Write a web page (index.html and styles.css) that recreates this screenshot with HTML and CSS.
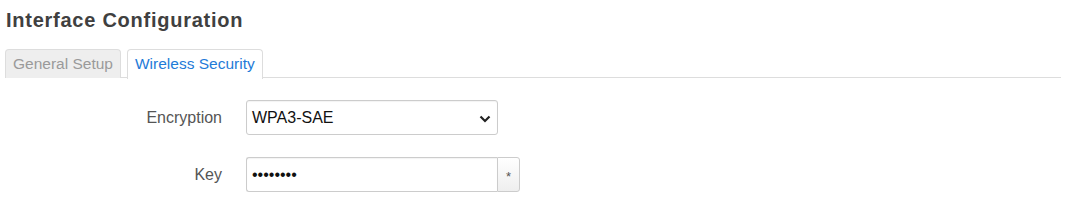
FILE: index.html
```html
<!DOCTYPE html>
<html lang="en">
<head>
    <meta charset="UTF-8">
    <title>Interface Configuration</title>
    <link rel="stylesheet" href="styles.css">
</head>
<body>
    <div class="page">
        <h2>Interface Configuration</h2>
        <ul class="tabs">
            <li class="tab">General Setup</li>
            <li class="tab active">Wireless Security</li>
        </ul>

        <div class="section">
            <div class="row">
                <label class="row-label" for="encryption">Encryption</label>
                <div class="row-field">
                    <div class="select-box">
                        <span>WPA3-SAE</span>
                        <svg class="chevron" width="12" height="8" viewBox="0 0 12 8">
                            <path d="M1.5 1.5 L6 6 L10.5 1.5" fill="none" stroke="#222" stroke-width="2.2"/>
                        </svg>
                    </div>
                </div>
            </div>

            <div class="row">
                <label class="row-label" for="key">Key</label>
                <div class="row-field">
                    <div class="input-group">
                        <input type="password" id="key" value="12345678">
                        <button class="reveal">*</button>
                    </div>
                </div>
            </div>
        </div>
    </div>
</body>
</html>
```

FILE: styles.css
```css
* {
    margin: 0;
    padding: 0;
    box-sizing: border-box;
}

body {
    font-family: 'Liberation Sans', Arial, sans-serif;
    font-size: 14px;
    color: #404040;
    background: #fff;
}

.page {
    padding: 8px 5px 0 5px;
}

h2 {
    font-size: 20px;
    font-weight: bold;
    letter-spacing: 0.75px;
    color: #404040;
    line-height: 25px;
    padding-left: 1px;
}

.tabs {
    list-style: none;
    display: flex;
    gap: 6px;
    margin-top: 16px;
    border-bottom: 1px solid #ddd;
    height: 29px;
}

.tab {
    height: 29px;
    padding: 0 7px;
    line-height: 28px;
    font-size: 15.5px;
    color: #9a9a9a;
    background: #eee;
    border: 1px solid #ddd;
    border-bottom: none;
    border-radius: 4px 4px 0 0;
}

.tab.active {
    color: #1f7bd8;
    background: #fff;
    height: 30px;
}

.section {
    padding-top: 22px;
}

.row {
    display: flex;
    align-items: center;
    margin-bottom: 22px;
}

.row-label {
    width: 217px;
    text-align: right;
    font-size: 16px;
    color: #555;
}

.row-field {
    padding-left: 24px;
}

.select-box {
    width: 252px;
    height: 35px;
    border: 1px solid #ccc;
    border-radius: 3px;
    display: flex;
    align-items: center;
    justify-content: space-between;
    padding: 0 6px 0 5px;
    font-size: 16px;
    color: #111;
    box-shadow: inset 0 1px 1px rgba(0, 0, 0, 0.05);
}

.chevron {
    margin-top: 2px;
}

.input-group {
    display: flex;
    height: 35px;
}

.input-group input {
    width: 251px;
    height: 35px;
    border: 1px solid #ccc;
    border-right: none;
    border-radius: 3px 0 0 3px;
    padding: 0 5px;
    font-family: 'Liberation Sans', Arial, sans-serif;
    font-size: 16px;
    color: #111;
    box-shadow: inset 0 1px 1px rgba(0, 0, 0, 0.05);
}

.reveal {
    width: 23px;
    height: 35px;
    border: 1px solid #ccc;
    border-radius: 0 3px 3px 0;
    background: linear-gradient(#fff, #eee);
    font-size: 13px;
    color: #555;
    padding-top: 4px;
}
```
